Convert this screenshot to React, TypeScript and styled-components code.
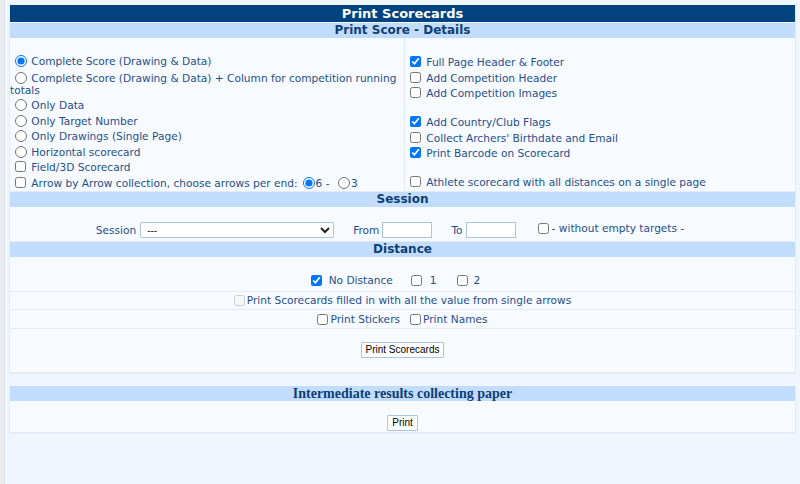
import React from "react";
import styled, { createGlobalStyle } from "styled-components";

const GlobalStyle = createGlobalStyle`
  html, body {
    margin: 0;
    padding: 0;
    background: #f0f6fe;
  }
  body {
    font-family: "DejaVu Sans", Verdana, sans-serif;
    font-size: 10.6px;
    color: #1f4e8c;
  }
`;

const Page = styled.div`
  min-height: 484px;
  box-sizing: border-box;
  border-left: 4px solid #e9ebee;
  box-shadow: inset 1px 0 0 #dfe3e8;
  padding: 5px 4px 0 5px;
`;

const Panel = styled.div<{ $gap?: number }>`
  margin-top: ${(p) => p.$gap ?? 0}px;
  background: #f7fbff;
  border: 1px solid #e1ecf8;
  border-top: none;
`;

const TitleBar = styled.div`
  background: #00437f;
  color: #fff;
  font-weight: 700;
  font-size: 13px;
  text-align: center;
  height: 17px;
  line-height: 17px;
  border-bottom: 1px solid #f7fbff;
`;

const SectionHeader = styled.div<{ $serif?: boolean }>`
  background: #c1ddfb;
  color: #0e3d78;
  font-weight: 700;
  font-size: ${(p) => (p.$serif ? "14px" : "12px")};
  font-family: ${(p) =>
    p.$serif ? '"Liberation Serif", "Times New Roman", serif' : "inherit"};
  text-align: center;
  height: 15px;
  line-height: 15px;
`;

const Details = styled.div`
  display: grid;
  grid-template-columns: 394px 1fr;
  height: 153px;
  border-bottom: 1px solid #e1ecf8;
`;

const Column = styled.div<{ $right?: boolean }>`
  padding: ${(p) => (p.$right ? "17px" : "16px")} 0 0;
  border-left: ${(p) => (p.$right ? "1px solid #e1ecf8" : "none")};
`;

const Line = styled.div<{ $wrap?: boolean }>`
  line-height: ${(p) => (p.$wrap ? "12px" : "15.5px")};
  height: ${(p) => (p.$wrap ? "28.5px" : "15.5px")};
  padding-top: ${(p) => (p.$wrap ? "2px" : "0")};
  box-sizing: border-box;

  input[type="radio"] {
    width: 12px;
    height: 12px;
    margin: 0 1px 0 5px;
    vertical-align: -2px;
  }
  input[type="checkbox"] {
    width: 11px;
    height: 11px;
    margin: 0 2px 0 5px;
    vertical-align: -1px;
  }
`;

const Spacer = styled.div`
  height: 13.5px;
`;

const Row = styled.div<{ $pt?: number; $h: number; $pr?: number }>`
  display: flex;
  justify-content: center;
  align-items: flex-start;
  height: ${(p) => p.$h}px;
  box-sizing: border-box;
  padding-top: ${(p) => p.$pt ?? 0}px;
  padding-right: ${(p) => p.$pr ?? 0}px;
  border-bottom: 1px solid #e1ecf8;
  white-space: nowrap;
`;

const Label = styled.label<{ $ml?: number }>`
  display: inline-flex;
  align-items: center;
  margin-left: ${(p) => p.$ml ?? 0}px;
`;

const Select = styled.select`
  width: 194px;
  height: 16px;
  margin: 0 0 0 4px;
  padding: 0 2px;
  font-size: 10px;
  font-family: "Liberation Sans", Arial, sans-serif;
  border: 1px solid #a9c4e4;
  border-radius: 2px;
  background: #fff;
  color: #222;
`;

const TextBox = styled.input`
  width: 50px;
  height: 16px;
  box-sizing: border-box;
  margin: 0 0 0 3px;
  border: 1px solid #a9c4e4;
  background: #fff;
`;

const Button = styled.button`
  font-family: "Liberation Sans", Arial, sans-serif;
  font-size: 10px;
  color: #000;
  background: #fff;
  border: 1px solid #a9c4e4;
  border-radius: 1px;
  height: 16px;
  padding: 0 4px;
  line-height: 14px;
`;

const Check = styled.input.attrs({ type: "checkbox" })<{ $gap?: number }>`
  margin: 0 ${(p) => p.$gap ?? 3}px 0 0;
  width: 11px;
  height: 11px;
`;

export default function App() {
  return (
    <>
      <GlobalStyle />
      <Page>
        <Panel>
          <TitleBar>Print Scorecards</TitleBar>
          <SectionHeader>Print Score - Details</SectionHeader>
          <Details>
            <Column>
              <Line>
                <input type="radio" name="mode" defaultChecked /> Complete Score (Drawing &amp; Data)
              </Line>
              <Line $wrap>
                <input type="radio" name="mode" /> Complete Score (Drawing &amp; Data) + Column for
                competition running totals
              </Line>
              <Line>
                <input type="radio" name="mode" /> Only Data
              </Line>
              <Line>
                <input type="radio" name="mode" /> Only Target Number
              </Line>
              <Line>
                <input type="radio" name="mode" /> Only Drawings (Single Page)
              </Line>
              <Line>
                <input type="radio" name="mode" /> Horizontal scorecard
              </Line>
              <Line>
                <input type="checkbox" /> Field/3D Scorecard
              </Line>
              <Line>
                <input type="checkbox" /> Arrow by Arrow collection, choose arrows per end:
                <input type="radio" name="arrows" defaultChecked />6 -{" "}
                <input type="radio" name="arrows" />3
              </Line>
            </Column>
            <Column $right>
              <Line>
                <input type="checkbox" defaultChecked /> Full Page Header &amp; Footer
              </Line>
              <Line>
                <input type="checkbox" /> Add Competition Header
              </Line>
              <Line>
                <input type="checkbox" /> Add Competition Images
              </Line>
              <Spacer />
              <Line>
                <input type="checkbox" defaultChecked /> Add Country/Club Flags
              </Line>
              <Line>
                <input type="checkbox" /> Collect Archers' Birthdate and Email
              </Line>
              <Line>
                <input type="checkbox" defaultChecked /> Print Barcode on Scorecard
              </Line>
              <Spacer />
              <Line>
                <input type="checkbox" /> Athlete scorecard with all distances on a single page
              </Line>
            </Column>
          </Details>
          <SectionHeader>Session</SectionHeader>
          <Row $h={35} $pt={15} $pr={19}>
            <Label $ml={-6}>
              Session
              <Select defaultValue="">
                <option value="">---</option>
              </Select>
            </Label>
            <Label $ml={19}>
              From
              <TextBox type="text" />
            </Label>
            <Label $ml={19}>
              To
              <TextBox type="text" />
            </Label>
            <Label $ml={22}>
              <Check />- without empty targets -
            </Label>
          </Row>
          <SectionHeader>Distance</SectionHeader>
          <Row $h={35} $pt={17} $pr={14}>
            <Label>
              <Check defaultChecked $gap={7} />
              No Distance
            </Label>
            <Label $ml={18}>
              <Check $gap={8} />1
            </Label>
            <Label $ml={20}>
              <Check $gap={6} />2
            </Label>
          </Row>
          <Row $h={18} $pt={2}>
            <Label>
              <Check disabled $gap={2} />
              Print Scorecards filled in with all the value from single arrows
            </Label>
          </Row>
          <Row $h={19} $pt={3}>
            <Label>
              <Check $gap={2} />
              Print Stickers
            </Label>
            <Label $ml={10}>
              <Check $gap={2} />
              Print Names
            </Label>
          </Row>
          <Row $h={44} $pt={13}>
            <Button>Print Scorecards</Button>
          </Row>
        </Panel>
        <Panel $gap={12}>
          <SectionHeader $serif>Intermediate results collecting paper</SectionHeader>
          <Row $h={32} $pt={14}>
            <Button>Print</Button>
          </Row>
        </Panel>
      </Page>
    </>
  );
}
